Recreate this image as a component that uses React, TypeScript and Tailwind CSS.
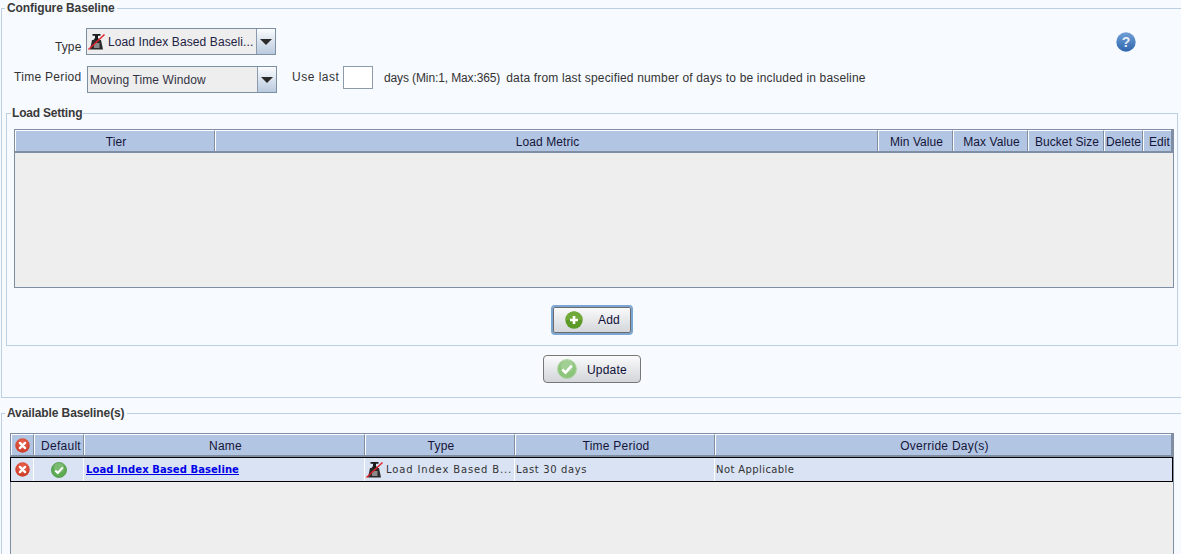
import React from "react";

const WeightIcon = () => (
  <svg width="17" height="17" viewBox="0 0 17 17" className="shrink-0">
    <path d="M4.5 1h8v1.8H10v2.2l1.5 2h-6L7 5V2.8H4.5z" fill="#1c1c1c" />
    <path d="M4 7h9l2 9.5H2z" fill="#2b2b2b" />
    <rect x="6" y="10" width="5.5" height="5" fill="#8a8a8a" />
    <path d="M0.5 16.5L16.5 1.5" stroke="#e0202a" strokeWidth="1.4" />
  </svg>
);

const CloseIcon = ({ id }: { id: string }) => (
  <svg width="15" height="15" viewBox="0 0 16 16" className="shrink-0">
    <defs>
      <radialGradient id={id} cx="50%" cy="35%" r="70%">
        <stop offset="0%" stopColor="#ee6a55" />
        <stop offset="100%" stopColor="#c8321f" />
      </radialGradient>
    </defs>
    <circle cx="8" cy="8" r="7.7" fill={`url(#${id})`} />
    <path d="M5.2 5.2l5.6 5.6M10.8 5.2l-5.6 5.6" stroke="#fff" strokeWidth="2.4" strokeLinecap="round" />
  </svg>
);

const CheckIcon = ({ size = 16, pale = false }: { size?: number; pale?: boolean }) => (
  <svg width={size} height={size} viewBox="0 0 20 20" className="shrink-0">
    <circle cx="10" cy="10" r="9.4" fill={pale ? "#8cc47c" : "#5dab52"} stroke={pale ? "#a9d49c" : "#4a9441"} strokeWidth="1" />
    <circle cx="10" cy="7" r="6.5" fill="#ffffff" opacity="0.18" />
    <path d="M5.3 10.5l3.2 3.2 6.2-7" fill="none" stroke="#fff" strokeWidth="2.6" />
  </svg>
);

const PlusIcon = () => (
  <svg width="18" height="18" viewBox="0 0 18 18" className="shrink-0">
    <circle cx="9" cy="9" r="8.7" fill="#5c9a28" />
    <path d="M0.5 9a8.5 8.5 0 0 1 17 0z" fill="#7eb544" opacity="0.6" />
    <path d="M9 5v8M5 9h8" stroke="#fff" strokeWidth="2.6" />
  </svg>
);

const HelpIcon = () => (
  <svg width="20" height="20" viewBox="0 0 20 20">
    <defs>
      <linearGradient id="helpg" x1="0" y1="0" x2="0" y2="1">
        <stop offset="0%" stopColor="#6f9fd8" />
        <stop offset="100%" stopColor="#2f66ac" />
      </linearGradient>
    </defs>
    <circle cx="10" cy="10" r="9.7" fill="url(#helpg)" />
    <text x="10" y="15" textAnchor="middle" fontSize="14" fontWeight="700" fontFamily="Liberation Sans, sans-serif" fill="#e6eef8">?</text>
  </svg>
);

const Arrow = () => (
  <div className="flex h-full w-[19px] items-center justify-center border-l border-[#8a9bb0] bg-gradient-to-b from-[#fbfcfe] to-[#b9cade]">
    <div className="h-0 w-0 border-x-[6px] border-t-[6px] border-x-transparent border-t-[#2a2a2a]" />
  </div>
);

const Select = ({ children, className }: { children: React.ReactNode; className: string }) => (
  <div className={`flex h-[27px] items-center border border-[#7d8fa3] bg-[#eeeeee] ${className}`}>
    <div className="flex min-w-0 flex-1 items-center">{children}</div>
    <Arrow />
  </div>
);

const HeaderCell = ({ w, children, last, pad = "pl-[2px]" }: { w: string; children?: React.ReactNode; last?: boolean; pad?: string }) => (
  <div
    className={`flex h-full shrink-0 items-center justify-center border-t border-l border-t-white border-l-white pt-[1px] text-[12px] text-[#15153a] ${pad} ${w} ${
      last ? "" : "border-r border-r-[#7f8ea3]"
    }`}
  >
    {children}
  </div>
);

const RowCell = ({ w, children, className = "" }: { w: string; children?: React.ReactNode; className?: string }) => (
  <div className={`flex h-full items-center border-r border-r-white font-['DejaVu_Sans',Verdana,sans-serif] text-[10px] text-[#333333] ${w} ${className}`}>
    {children}
  </div>
);

const Btn = ({ icon, label, gap, className }: { icon: React.ReactNode; label: string; gap: string; className: string }) => (
  <div className={`flex items-center rounded-[4px] bg-gradient-to-b from-[#fbfbfc] via-[#e6e8ea] to-[#d2d5da] text-[12px] tracking-[0.2px] text-[#10103a] ${className}`}>
    {icon}
    <span className={gap}>{label}</span>
  </div>
);

export default function App() {
  return (
    <div className="h-[554px] w-[1181px] overflow-hidden bg-[#f7faff] font-['Liberation_Sans',Arial,sans-serif] text-[12px] text-[#333333]">
      <fieldset className="mr-[-4px] ml-[1px] h-[398px] min-w-0 border border-[#bdd0e2] pr-0 pl-[4px]">
        <legend className="ml-[-1px] px-[2px] text-[12px] leading-[16px] font-bold tracking-[-0.1px] text-[#3a3a3a]">Configure Baseline</legend>

        <div className="flex h-[89px] flex-col">
          <div className="mt-[12px] flex h-[27px] items-center">
            <span className="mt-[11px] ml-[49px] w-[27px] text-[12px] tracking-[0.1px]">Type</span>
            <Select className="ml-[4px] w-[190px]">
              <div className="ml-[1px]"><WeightIcon /></div>
              <span className="ml-[3px] truncate text-[12px] tracking-[0.1px] text-[#222244]">Load Index Based Baseli...</span>
            </Select>
            <div className="ml-auto mr-[48px]"><HelpIcon /></div>
          </div>
          <div className="mt-[11px] flex h-[27px] items-center">
            <span className="mb-[5px] ml-[8px] w-[73px] text-[12px] tracking-[0.3px]">Time Period</span>
            <Select className="w-[190px]">
              <span className="ml-[2px] text-[12px] tracking-[0.1px] text-[#333344]">Moving Time Window</span>
            </Select>
            <span className="mb-[5px] ml-[15px] w-[51px] text-[12px] tracking-[0.5px]">Use last</span>
            <div className="mb-[4px] h-[23px] w-[30px] border border-[#8d9aa9] bg-white" />
            <span className="mb-[3px] ml-[11px] text-[12px] tracking-[-0.12px]">days (Min:1, Max:365)</span>
            <span className="mb-[3px] ml-[6px] text-[12px] tracking-[0.17px]">data from last specified number of days to be included in baseline</span>
          </div>
        </div>

        <fieldset className="mr-[6px] h-[241px] min-w-0 border border-[#bdd0e2] pr-[3px] pl-[7px]">
          <legend className="ml-[-3px] px-[1px] text-[12px] leading-[16px] font-bold tracking-[-0.2px] text-[#3a3a3a]">Load Setting</legend>
          <div className="mt-[8px] h-[159px] border border-[#7f8ea3] bg-[#eeeeee]">
            <div className="flex h-[23px] border-r-2 border-b-2 border-[#7f8ea3] bg-[#b2c6e3] tracking-[0.08px]">
              <HeaderCell w="w-[200px]">Tier</HeaderCell>
              <HeaderCell w="w-[663px]">Load Metric</HeaderCell>
              <HeaderCell w="w-[75px]">Min Value</HeaderCell>
              <HeaderCell w="w-[75px]">Max Value</HeaderCell>
              <HeaderCell w="w-[76px]">Bucket Size</HeaderCell>
              <HeaderCell w="w-[39px]" pad="pl-0">Delete</HeaderCell>
              <HeaderCell w="w-[28px]" last pad="pl-[4px]">Edit</HeaderCell>
            </div>
          </div>
          <div className="mt-[17px] flex justify-center pr-[4px]">
            <Btn
              className="h-[30px] w-[82px] border-2 border-[#7ba6d4] pl-[12px] shadow-[inset_0_0_0_1px_#6b6b6b]"
              icon={<PlusIcon />}
              label="Add"
              gap="ml-[15px]"
            />
          </div>
        </fieldset>

        <div className="mt-[9px] ml-[537px] flex">
          <Btn
            className="h-[28px] w-[98px] border border-[#777777] pl-[13px]"
            icon={<CheckIcon size={20} pale />}
            label="Update"
            gap="mt-[1px] ml-[10px]"
          />
        </div>
      </fieldset>

      <fieldset className="mt-[7px] mr-[-4px] ml-[1px] h-[149px] min-w-0 border border-b-0 border-[#bdd0e2] pr-0 pl-[8px]">
        <legend className="ml-[-5px] px-[2px] text-[12px] leading-[16px] font-bold tracking-[-0.1px] text-[#3a3a3a]">Available Baseline(s)</legend>
        <div className="mt-[12px] h-[130px] w-[1164px] border border-b-0 border-[#7f8ea3] bg-[#eeeeee]">
          <div className="flex h-[23px] border-r-2 border-b-2 border-[#7f8ea3] bg-[#b2c6e3] tracking-[0.25px]">
            <HeaderCell w="w-[23px]" pad="pl-0"><CloseIcon id="closeA" /></HeaderCell>
            <HeaderCell w="w-[50px]" pad="pl-[4px]">Default</HeaderCell>
            <HeaderCell w="w-[281px]">Name</HeaderCell>
            <HeaderCell w="w-[150px]">Type</HeaderCell>
            <HeaderCell w="w-[200px]">Time Period</HeaderCell>
            <HeaderCell w="flex-1 shrink" last>Override Day(s)</HeaderCell>
          </div>
          <div className="mr-0 ml-[-1px] flex h-[25px] border-[1.5px] border-black bg-[#d9e3f3]">
            <RowCell w="w-[23px]" className="justify-center"><CloseIcon id="closeB" /></RowCell>
            <RowCell w="w-[50px]" className="justify-center"><CheckIcon size={16} /></RowCell>
            <RowCell w="w-[281px]" className="pl-[2px]">
              <span className="font-bold tracking-[0.08px] text-[#0000e6] underline">Load Index Based Baseline</span>
            </RowCell>
            <RowCell w="w-[150px]" className="pl-[1px]">
              <WeightIcon />
              <span className="ml-[3px] tracking-[0.85px]">Load Index Based B...</span>
            </RowCell>
            <RowCell w="w-[200px]" className="pl-[1px]"><span className="tracking-[0.63px]">Last 30 days</span></RowCell>
            <RowCell w="flex-1" className="border-r-0 pl-[1px]"><span className="tracking-[0.4px]">Not Applicable</span></RowCell>
          </div>
        </div>
      </fieldset>
    </div>
  );
}
